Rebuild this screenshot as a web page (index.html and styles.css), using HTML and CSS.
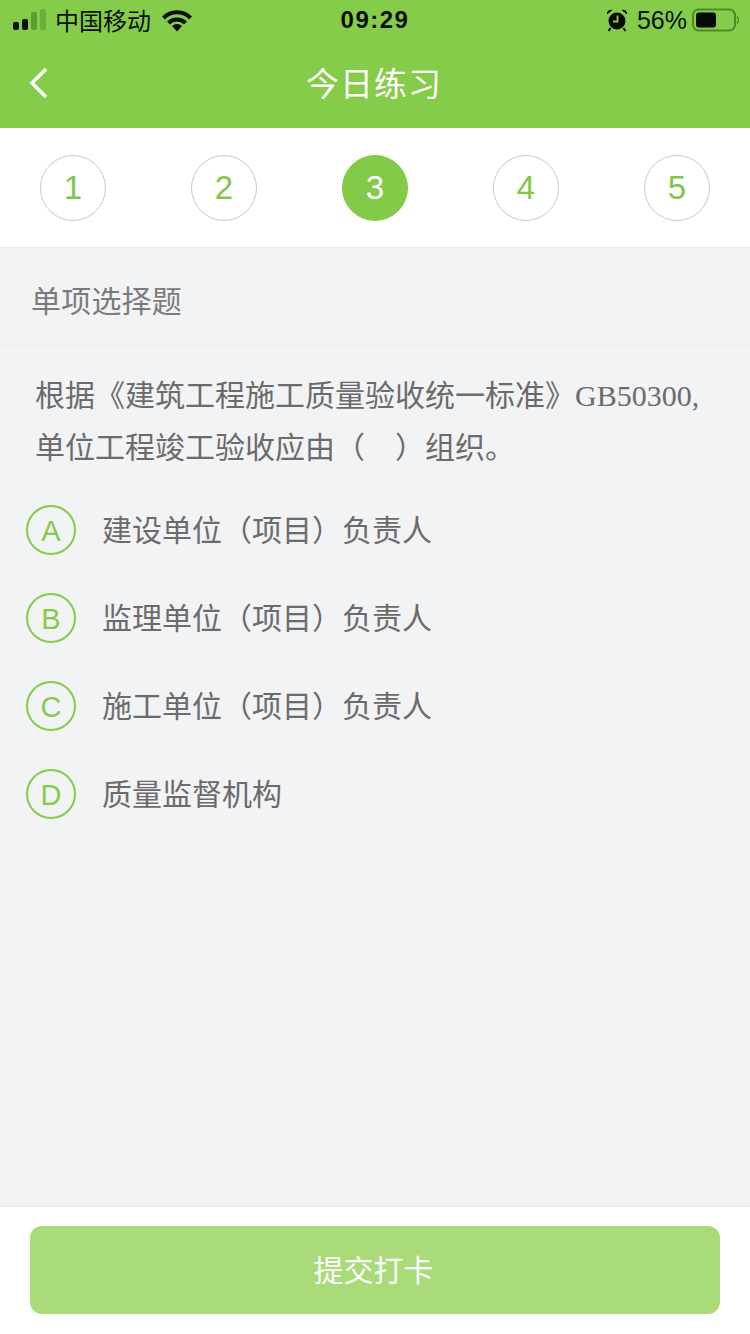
FILE: index.html
```html
<!DOCTYPE html>
<html lang="zh-CN">
<head>
  <meta charset="UTF-8" />
  <meta name="viewport" content="width=device-width, initial-scale=1.0" />
  <title>今日练习</title>
  <link rel="stylesheet" href="styles.css">
</head>
<body>
  <div class="page">
    <header class="top">
      <div class="status">
        <div class="status-left">
          <svg class="signal" width="34" height="24" viewBox="0 0 34 24">
            <rect x="0" y="14" width="6" height="8" rx="2" fill="#0a0f04"/>
            <rect x="9" y="11" width="6" height="11" rx="2" fill="#0a0f04"/>
            <rect x="18" y="4" width="6" height="18" rx="2" fill="#5e9a35"/>
            <rect x="27" y="1" width="6" height="21" rx="2" fill="#6cab3e"/>
          </svg>
          <span class="carrier">中国移动</span>
          <svg class="wifi" width="30" height="22" viewBox="0 0 30 22">
            <path d="M1.500 8 A19 19 0 0 1 28.500 8" fill="none" stroke="#050a02" stroke-width="4"/>
            <path d="M6.500 13 A12 12 0 0 1 23.500 13" fill="none" stroke="#050a02" stroke-width="4"/>
            <path d="M10 16 L15 21.500 L20 16 A7.500 7.500 0 0 0 10 16 Z" fill="#050a02"/>
          </svg>
        </div>
        <span class="clock">09:29</span>
        <div class="status-right">
          <svg class="alarm" width="22" height="24" viewBox="0 0 22 24">
            <circle cx="11" cy="13" r="8.500" fill="#050a02"/>
            <path d="M1 6.500 A4 4 0 0 1 6.500 2 Z M21 6.500 A4 4 0 0 0 15.500 2 Z" fill="#050a02"/>
            <path d="M4.500 20 L2.500 23 M17.500 20 L19.500 23" stroke="#050a02" stroke-width="2"/>
            <path d="M11.500 7.500 V13.500 H7" fill="none" stroke="#86cc4b" stroke-width="1.800"/>
          </svg>
          <span class="percent">56%</span>
          <svg class="battery" width="47" height="24" viewBox="0 0 47 24">
            <rect x="1" y="1.500" width="42" height="21" rx="5.500" fill="none" stroke="#4f8a28" stroke-width="2"/>
            <rect x="4" y="4.500" width="20" height="15" rx="3" fill="#050a02"/>
            <path d="M45 8.500 A5 5 0 0 1 45 15.500" fill="none" stroke="#4f8a28" stroke-width="1.500"/>
          </svg>
        </div>
      </div>
      <div class="nav">
        <svg class="back" width="20" height="32" viewBox="0 0 20 32">
          <path d="M17 2 L3 16 L17 30" fill="none" stroke="#fff" stroke-width="3.500"/>
        </svg>
        <h1>今日练习</h1>
      </div>
    </header>

    <nav class="steps">
      <span class="step">1</span>
      <span class="step">2</span>
      <span class="step current">3</span>
      <span class="step">4</span>
      <span class="step">5</span>
    </nav>

    <main class="content">
      <div class="kind">单项选择题</div>
      <p class="question">根据《建筑工程施工质量验收统一标准》<span class="latin">GB50300,</span> 单位工程竣工验收应由（<span class="blank"></span>）组织。</p>
      <ul class="options">
        <li class="option"><span class="letter">A</span><span class="label">建设单位（项目）负责人</span></li>
        <li class="option"><span class="letter">B</span><span class="label">监理单位（项目）负责人</span></li>
        <li class="option"><span class="letter">C</span><span class="label">施工单位（项目）负责人</span></li>
        <li class="option"><span class="letter">D</span><span class="label">质量监督机构</span></li>
      </ul>
    </main>

    <footer class="bottom">
      <button class="submit" type="button">提交打卡</button>
    </footer>
  </div>
</body>
</html>
```

FILE: styles.css
```css
* {
  box-sizing: border-box;
}
body {
  margin: 0;
  font-family: "Liberation Sans", "Noto Sans CJK SC", sans-serif;
  background-color: #f2f3f5;
}
.page {
  display: flex;
  flex-direction: column;
  width: 750px;
  height: 1334px;
  overflow: hidden;
}

/* green top: status bar + title */
.top {
  height: 128px;
  flex: none;
  background-color: #86cc4b;
}
.status {
  position: relative;
  display: flex;
  justify-content: space-between;
  align-items: center;
  height: 40px;
  padding: 0 12px 0 13px;
  color: #0a0f04;
}
.status-left, .status-right {
  display: flex;
  align-items: center;
}
.signal {
  margin-right: 8px;
}
.carrier {
  font-size: 24px;
  line-height: 40px;
  margin-top: 3px;
  margin-right: 11px;
}
.wifi {
  margin-top: 2px;
}
.clock {
  position: absolute;
  left: 0;
  right: 0;
  text-align: center;
  font-size: 24px;
  font-weight: bold;
  letter-spacing: 1.500px;
}
.alarm {
  margin-right: 9px;
}
.percent {
  font-size: 25px;
  margin-right: 5px;
}
.battery {
  margin-right: -1px;
}
.nav {
  position: relative;
  display: flex;
  justify-content: center;
  align-items: center;
  height: 88px;
  padding-bottom: 4px;
  padding-right: 2px;
}
.back {
  position: absolute;
  left: 29px;
  top: 27px;
}
.nav h1 {
  margin: 0;
  font-size: 33px;
  font-weight: normal;
  color: #fff;
  letter-spacing: 1px;
}

/* question number row */
.steps {
  display: flex;
  justify-content: space-between;
  flex: none;
  height: 120px;
  padding: 27px 40px 0;
  background: #fff;
  border-bottom: 1px solid #e9eaec;
}
.step {
  display: flex;
  justify-content: center;
  align-items: center;
  width: 66px;
  height: 66px;
  border: 1px solid #c9c9c9;
  border-radius: 50%;
  font-size: 33px;
  color: #7fc64a;
}
.step.current {
  background-color: #82ca47;
  border-color: #82ca47;
  color: #fff;
}

.content {
  flex: 1;
}
.kind {
  height: 98px;
  padding: 34px 30px 0 31px;
  font-size: 30px;
  line-height: 40px;
  letter-spacing: 0.200px;
  color: #7b7b7b;
  border-bottom: 1px solid #e9eaec;
}
.question {
  margin: 24px 0 0;
  padding: 0 20px 0 35px;
  font-size: 30px;
  line-height: 52px;
  color: #6b6b6b;
}
.latin {
  font-family: "Liberation Serif", serif;
}
.blank {
  display: inline-block;
  width: 30px;
}
.options {
  list-style: none;
  margin: 12px 0 0;
  padding: 0 0 0 26px;
}
.option {
  display: flex;
  align-items: center;
  height: 88px;
  font-size: 30px;
  color: #6b6b6b;
}
.label {
  margin-top: -4px;
}
.letter {
  display: flex;
  justify-content: center;
  align-items: center;
  width: 50px;
  height: 50px;
  margin-right: 26px;
  padding-top: 2px;
  border: 2px solid #86cc4b;
  border-radius: 50%;
  font-size: 29px;
  color: #86cc4b;
}

.bottom {
  flex: none;
  height: 128px;
  padding: 19px 30px 0;
  background: #fff;
  border-top: 1px solid #e9eaec;
}
.submit {
  display: block;
  width: 100%;
  height: 88px;
  padding: 0 3px 4px 0;
  border: none;
  border-radius: 12px;
  background-color: #a9dc79;
  color: #fff;
  font-family: inherit;
  font-size: 30px;
}
```
